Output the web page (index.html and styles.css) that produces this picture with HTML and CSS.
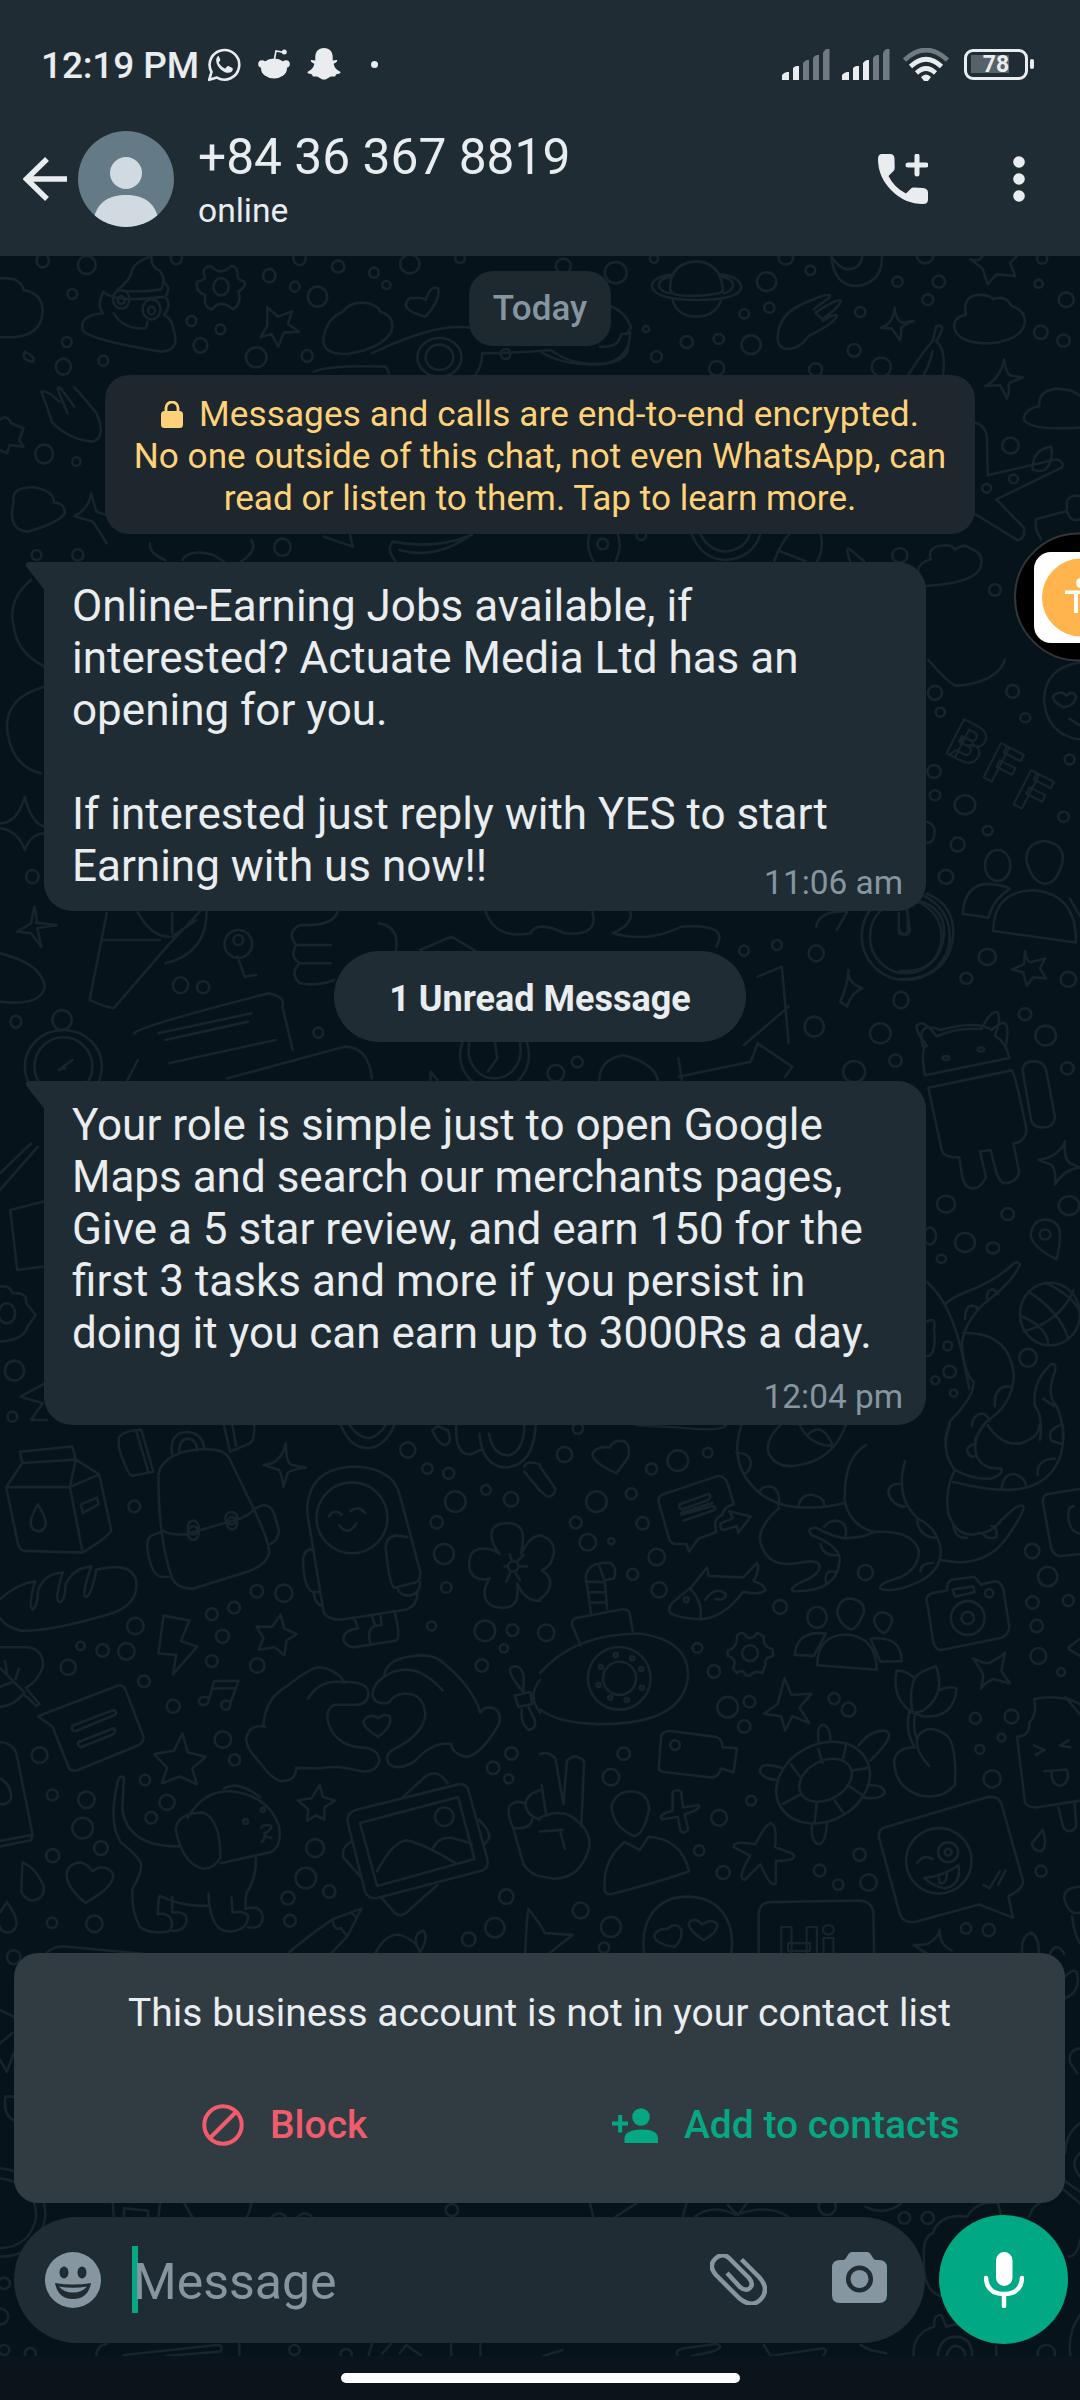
FILE: index.html
```html
<!DOCTYPE html>
<html lang="en">
<head>
<meta charset="utf-8">
<title>Chat</title>
<link rel="stylesheet" href="styles.css">
</head>
<body>
<div class="phone">
  <header class="top">
    <div class="status">
      <span class="clock">12:19 PM</span>
      <svg class="st-wa" viewBox="0 0 34 35"><path d="M2.2 32.8 4.5 25A14.8 14.8 0 1 1 10 30.6Z" fill="none" stroke="#e9edef" stroke-width="2.6" stroke-linejoin="round"/><path d="M12.2 8.8c-.8 0-3 1.3-3 4.600 0 6.500 7.800 12.400 11.900 12.400 3 0 4.700-1.800 4.700-3.800 0-.7-.3-1-.8-1.200l-3.500-1.700c-.7-.3-1-.2-1.400.4l-1.300 1.600c-.4.500-.8.500-1.400.2-2.300-1-4.400-3-5.500-5.200-.3-.6-.1-.9.300-1.300l.9-1.100c.3-.4.300-.8.100-1.300l-1.300-3c-.3-.6-.6-.7-.7-.6Z" fill="#e9edef"/></svg>
      <svg class="st-reddit" viewBox="0 0 32 30"><ellipse cx="16" cy="19.500" rx="13" ry="10" fill="#e9edef"/><circle cx="4" cy="15" r="3.800" fill="#e9edef"/><circle cx="28" cy="15" r="3.800" fill="#e9edef"/><path d="M16.500 10 18 2l8.500 1.500" fill="none" stroke="#e9edef" stroke-width="1.600"/><circle cx="26.300" cy="3" r="2.500" fill="#e9edef"/></svg>
      <svg class="st-snap" viewBox="0 0 34 32"><path d="M17 0c5.500 0 8.700 3.800 8.700 9v3.300c1.500.5 2.800-.7 4.300-.2.900.8-.3 2.300-3.300 3.700.5 4 3.500 6.700 7 8.200-.5 2.200-4.500 2-4.900 2.700-.3.600 0 1.500-1 1.700-1.500.2-3.300-.3-5.300.800C20.600 30.300 19.300 31.600 17 31.600s-3.600-1.300-5.500-2.400c-2-1.100-3.800-.6-5.300-.8-1-.2-.7-1.100-1-1.700-.4-.7-4.400-.5-4.900-2.700 3.500-1.500 6.500-4.200 7-8.200-3-1.400-4.200-2.900-3.300-3.700 1.500-.5 2.800.7 4.300.2V9C8.300 3.800 11.500 0 17 0Z" fill="#e9edef"/></svg>
      <i class="st-dot"></i>
      <svg class="sig" viewBox="0 0 48 31"><g fill="#e9edef"><path d="M0 31v-5q2-2.500 5-3h2v8Z"/><path d="M11 31V19q2-2 4-2h2v14Z"/></g><g fill="#707a80"><path d="M21 31V14q2-2.500 4-3h2v20Z"/><path d="M31 31V9q2-3 4-3h2v25Z"/><path d="M41 31V4q2-4 4-4h2.500v31Z"/></g></svg>
      <svg class="sig sig2" viewBox="0 0 48 31"><g fill="#e9edef"><path d="M0 31v-5q2-2.500 5-3h2v8Z"/><path d="M11 31V19q2-2 4-2h2v14Z"/><path d="M21 31V14q2-2.500 4-3h2v20Z"/></g><g fill="#707a80"><path d="M31 31V9q2-3 4-3h2v25Z"/><path d="M41 31V4q2-4 4-4h2.500v31Z"/></g></svg>
      <svg class="wifi" viewBox="0 0 46 33"><g fill="none" stroke-width="4.600"><path d="M1.500 12Q23-8 44.500 12" stroke="#707a80"/><path d="M7.500 18.500q15.500-14.500 31 0M13.500 25q9.500-9 19 0" stroke="#e9edef"/></g><path d="M18 29q5-5 10 0l-3 4h-4Z" fill="#e9edef"/></svg>
      <span class="battery"><b>78</b></span><i class="batt-cap"></i>
    </div>
    <div class="bar">
      <svg class="back" viewBox="0 0 44 44"><path d="M44 22H4M24 2 3.500 22 24 42" fill="none" stroke="#e9edef" stroke-width="5.500"/></svg>
      <svg class="avatar" viewBox="0 0 96 96"><defs><clipPath id="av"><circle cx="48" cy="48" r="48"/></clipPath></defs><g clip-path="url(#av)"><rect width="96" height="96" fill="#647a87"/><circle cx="48" cy="42" r="16" fill="#d0dae0"/><path d="M15 90C19 70 32 64 48 64s29 6 33 26q-33 12-66 0Z" fill="#d0dae0"/></g></svg>
      <div class="who"><div class="name">+84 36 367 8819</div><div class="presence">online</div></div>
      <svg class="call" viewBox="0 0 50 50"><path d="M4 0H12Q16.500 0 16.500 5L16.700 14Q16.700 16 15.500 17L10.500 22Q16 33.500 28 39.500L33 34.500Q34 33.500 36 33.600L45 34Q50 34.500 50 38.500V45.500Q50 50 45 50Q27 50 13.500 36.500Q0 23 0 5Q0 0 4 0Z" fill="#e9edef"/><path d="M39 2v18M30 11h18" stroke="#e9edef" stroke-width="5" stroke-linecap="round"/></svg>
      <svg class="more" viewBox="0 0 12 46"><g fill="#e9edef"><circle cx="6" cy="6" r="5.800"/><circle cx="6" cy="23" r="5.800"/><circle cx="6" cy="40" r="5.800"/></g></svg>
    </div>
  </header>

  <main class="chat">
    <svg class="wallpaper" viewBox="0 256 1080 2100">
      <!-- upper left doodles -->
      <g transform="translate(0 250) scale(.6888 .3333)">
        <path d="M0 85Q30 80 34 120Q62 130 62 185Q60 255 20 262L0 262M170 120Q190 90 192 60Q196 35 220 18Q218 50 232 62Q242 90 234 118Q205 130 170 120M150 125Q165 160 240 140Q250 110 236 95M150 125Q140 170 150 190Q115 195 120 240Q130 270 235 305Q262 300 252 240Q250 205 238 195Q250 165 240 140M165 190Q180 240 212 235L214 215"/>
        <ellipse cx="176" cy="148" rx="12" ry="28"/><ellipse cx="220" cy="178" rx="13" ry="30"/><ellipse cx="176" cy="150" rx="5" ry="12"/><ellipse cx="220" cy="182" rx="5" ry="12"/>
        <path d="M306 48Q320 80 336 48Q346 50 345 78Q345 90 355 95Q358 110 346 125Q352 160 338 178Q320 145 308 178Q295 175 298 135Q283 125 286 95Q298 90 298 80Q290 55 306 48"/><ellipse cx="321" cy="110" rx="11" ry="26"/>
        <path d="M388 172 404 200 424 184 418 222 434 245 412 248 404 290 394 252 378 262 388 228ZM498 185Q510 150 535 160Q550 170 552 185Q575 200 568 245Q555 295 505 312Q465 315 470 260Q475 205 498 185M600 145Q612 140 618 150Q625 105 636 115Q640 150 618 200Q580 180 592 150Q596 142 600 145M540 310Q590 260 630 240Q660 225 690 235M455 365Q480 345 560 350L565 370M690 375Q700 350 700 310Q740 310 800 300Q830 350 880 340Q915 330 912 280"/>
        <ellipse cx="638" cy="322" rx="32" ry="58"/><ellipse cx="638" cy="322" rx="20" ry="38"/>
        <path d="M90 420Q80 400 86 430L98 490M90 420 108 470M60 425Q72 490 75 515Q100 570 135 575Q155 560 140 490Q125 450 108 412M60 425Q70 420 86 455M0 510Q10 490 16 520L34 535 28 570 34 590 14 585 10 610 0 600M20 755Q15 710 50 712Q80 725 78 758Q95 760 94 790Q85 820 40 845Q10 840 20 755M108 798Q130 775 132 730L140 785 160 800M108 798 135 815 155 880M36 305Q30 330 48 335Q52 320 36 305M218 880Q215 910 240 930M265 930Q275 895 310 915L325 935M470 860 512 890 508 850M575 935Q560 900 570 875Q630 900 685 855M580 900Q630 930 680 860M365 870Q375 900 350 935"/>
        <g><ellipse cx="62" cy="32" rx="9" ry="20"/><ellipse cx="126" cy="45" rx="13" ry="27"/><ellipse cx="105" cy="132" rx="7" ry="15"/><ellipse cx="256" cy="25" rx="8" ry="18"/><ellipse cx="391" cy="77" rx="9" ry="20"/><ellipse cx="435" cy="25" rx="9" ry="20"/><ellipse cx="491" cy="50" rx="9" ry="18"/><ellipse cx="543" cy="68" rx="7" ry="15"/><ellipse cx="595" cy="42" rx="14" ry="28"/><ellipse cx="461" cy="140" rx="14" ry="30"/><ellipse cx="428" cy="110" rx="7" ry="15"/><ellipse cx="561" cy="105" rx="6" ry="12"/><ellipse cx="668" cy="25" rx="7" ry="14"/><ellipse cx="278" cy="213" rx="7" ry="15"/><ellipse cx="320" cy="238" rx="7" ry="15"/><ellipse cx="291" cy="286" rx="10" ry="22"/><ellipse cx="372" cy="322" rx="15" ry="30"/><ellipse cx="446" cy="318" rx="8" ry="18"/><ellipse cx="97" cy="276" rx="7" ry="15"/><ellipse cx="92" cy="350" rx="11" ry="24"/><ellipse cx="150" cy="332" rx="7" ry="15"/><ellipse cx="734" cy="312" rx="7" ry="15"/><ellipse cx="64" cy="612" rx="13" ry="28"/><ellipse cx="111" cy="635" rx="6" ry="13"/><ellipse cx="410" cy="892" rx="12" ry="26"/><ellipse cx="113" cy="915" rx="8" ry="17"/></g>
      </g>
      <!-- upper right doodles -->
      <g transform="translate(540 256) scale(.3444 .3333)">
        <path d="M378 92Q380 20 455 16Q520 20 530 90M378 92Q375 112 395 116Q455 125 520 112Q535 105 530 90M390 55Q325 60 325 92Q335 132 455 132Q575 132 585 95Q580 60 520 55M385 62Q345 65 345 90Q355 110 378 112M528 62Q565 70 560 92Q555 108 533 112M385 133Q400 182 455 182Q510 180 525 133"/>
        <path d="M845 0Q855 90 920 90Q995 80 993 0M845 0Q870 40 895 40Q935 35 935 0M1250 10Q1275 20 1285 0M1250 10 1285 38 1300 85 1325 55 1380 60 1365 20 1385 0M1237 177Q1225 120 1275 116Q1310 118 1315 130Q1350 115 1370 150Q1410 165 1408 200Q1400 250 1310 262Q1210 265 1202 210Q1205 180 1237 177M690 240Q695 180 750 150Q790 130 820 120Q850 112 840 125L795 160M800 170Q850 135 870 132Q885 140 820 190L800 170M820 195Q860 170 862 180Q850 205 780 240Q750 285 710 278Q688 270 690 240M1030 155Q1030 185 1050 200L1085 195Q1060 205 1048 215Q1050 240 1045 252Q1030 230 1022 218L990 215Q1025 205 1030 155M1150 212Q1160 205 1168 215Q1162 240 1150 255Q1180 280 1170 355M1150 212 1140 255Q1110 290 1070 355M1140 285Q1130 330 1115 355M1348 310Q1350 345 1365 358L1403 365Q1370 375 1360 385Q1365 410 1355 428Q1345 400 1335 388L1293 390Q1335 370 1348 310M1450 450Q1445 405 1500 398Q1550 400 1568 420M1450 450Q1405 460 1405 490Q1420 525 1568 515M1265 500Q1300 510 1298 560L1300 658 1500 610Q1525 620 1515 635L1325 730 1405 815Q1410 850 1385 852L1265 775M1430 640Q1430 580 1485 572Q1490 620 1468 640Q1450 650 1430 640M1440 790 1530 765 1530 735Q1540 715 1568 720M1440 790Q1435 820 1455 850M1530 765Q1540 800 1568 790M0 285Q60 330 180 325Q260 310 262 230L235 235Q230 275 175 272M205 150Q250 170 265 215L250 235M440 833Q470 912 540 912Q620 905 640 833M465 833Q490 885 540 887Q595 880 610 833M145 833Q130 870 155 915M225 833Q240 870 220 915M680 915Q700 860 725 833M695 885 770 915M815 833Q825 880 805 915M900 915Q885 870 900 880L940 915M1135 910Q1120 870 1180 868Q1200 870 1205 882Q1230 860 1250 878Q1290 890 1280 930Q1270 980 1120 990M1135 910Q1100 920 1098 945"/>
        <g><circle cx="68" cy="30" r="22"/><circle cx="220" cy="50" r="32"/><circle cx="331" cy="8" r="12"/><circle cx="658" cy="77" r="28"/><circle cx="714" cy="5" r="21"/><circle cx="785" cy="43" r="14"/><circle cx="1038" cy="77" r="15"/><circle cx="1158" cy="77" r="18"/><circle cx="1126" cy="131" r="16"/><circle cx="1118" cy="-2" r="24"/><circle cx="1458" cy="8" r="15"/><circle cx="1448" cy="83" r="12"/><circle cx="1528" cy="131" r="22"/><circle cx="593" cy="173" r="14"/><circle cx="666" cy="155" r="15"/><circle cx="930" cy="168" r="15"/><circle cx="308" cy="219" r="9"/><circle cx="426" cy="258" r="18"/><circle cx="519" cy="249" r="15"/><circle cx="613" cy="266" r="28"/><circle cx="338" cy="302" r="16"/><circle cx="912" cy="283" r="19"/><circle cx="991" cy="333" r="28"/><circle cx="513" cy="337" r="22"/><circle cx="800" cy="341" r="19"/><circle cx="1454" cy="229" r="20"/><circle cx="1520" cy="254" r="18"/><circle cx="1366" cy="569" r="24"/><circle cx="1297" cy="697" r="13"/><circle cx="1375" cy="669" r="13"/><circle cx="182" cy="864" r="16"/><circle cx="1045" cy="898" r="22"/><circle cx="294" cy="838" r="14"/><circle cx="1321" cy="1002" r="17"/></g>
      </g>
      <!-- band between the bubbles and the left edge -->
      <g transform="translate(0 540) scale(.6888 .3333)">
        <path d="M45 120Q10 180 20 260Q25 340 65 380M65 440Q10 470 10 560Q15 680 60 700M0 850Q25 850 36 770Q45 850 65 860M0 865Q25 870 36 930Q45 880 65 880M50 1100Q55 1145 52 1148L82 1155 54 1165 60 1220 45 1180 25 1175 45 1150ZM155 1120 130 1380Q150 1400 165 1405L240 1225 290 1115M150 1200H232M200 1117Q220 1190 245 1190M250 1120V1180M285 1140 250 1190M300 1115Q300 1240 240 1270M345 1250 355 1310 372 1305M0 1240Q60 1270 65 1340Q60 1400 0 1385M490 1115Q485 1160 435 1155Q415 1180 430 1215Q420 1250 435 1270Q420 1300 435 1330Q460 1340 485 1320M550 1150Q580 1160 575 1230M430 1215H480M435 1270H480M705 1115Q720 1200 770 1180Q780 1140 820 1180Q870 1190 860 1115M610 1230 655 1190 690 1232M890 1180Q920 1150 915 1115M890 1180Q940 1210 990 1160Q1060 1150 1040 1220M195 1480Q200 1460 390 1360Q415 1370 410 1400L425 1530M230 1480 365 1420M240 1500 360 1445M1100 1310 1135 1280 1145 1510M1080 1515 1145 1400M1185 1160Q1190 1110 1230 1115L1215 1170M1340 1520Q1330 1440 1365 1470Q1420 1440 1440 1470Q1470 1410 1460 1520M1220 1385Q1230 1340 1232 1290Q1230 1330 1252 1345Q1235 1360 1230 1400Z"/>
        <ellipse cx="1315" cy="1188" rx="64" ry="132"/><ellipse cx="1315" cy="1190" rx="52" ry="110"/><path d="M1305 1120V1180Q1315 1190 1318 1170V1115"/><ellipse cx="90" cy="1440" rx="14" ry="30"/><ellipse cx="92" cy="1580" rx="56" ry="110"/><ellipse cx="92" cy="1580" rx="42" ry="88"/><ellipse cx="346" cy="1212" rx="20" ry="42"/><ellipse cx="346" cy="1200" rx="7" ry="15"/>
        <g><ellipse cx="53" cy="45" rx="7" ry="15"/><ellipse cx="47" cy="1010" rx="9" ry="20"/><ellipse cx="262" cy="1336" rx="11" ry="24"/><ellipse cx="295" cy="1342" rx="9" ry="18"/><ellipse cx="1128" cy="1215" rx="7" ry="15"/><ellipse cx="1185" cy="1240" rx="11" ry="24"/><ellipse cx="1080" cy="1232" rx="7" ry="15"/><ellipse cx="1308" cy="1380" rx="11" ry="25"/><ellipse cx="1278" cy="1480" rx="15" ry="30"/><ellipse cx="1182" cy="1460" rx="14" ry="30"/><ellipse cx="23" cy="1445" rx="8" ry="18"/><ellipse cx="462" cy="1478" rx="7" ry="15"/></g>
      </g>
      <g transform="translate(0 1040) scale(.6888 .3333)">
        <path d="M185 120 200 60M245 70 400 0M330 115 500 20Q535 20 540 115M625 120V95L635 120M870 120Q870 60 905 45Q950 70 955 120M985 110 1090 65 1100 10M985 55 990 120M1100 10 1150 80 1140 110M0 450 55 320M0 400 45 310M15 510 62 485M15 510 25 690 62 680M0 740Q15 735 18 760Q40 755 38 790L52 825 40 860Q35 900 0 905M65 1030 30 1070 62 1090 45 1140 68 1140M95 85 85 90 105 60"/>
        <ellipse cx="718" cy="45" rx="50" ry="105"/><ellipse cx="718" cy="30" rx="38" ry="85"/><path d="M718 0 722 55 708 95"/><ellipse cx="10" cy="820" rx="12" ry="30"/><ellipse cx="807" cy="100" rx="12" ry="25"/><ellipse cx="838" cy="66" rx="8" ry="16"/><ellipse cx="21" cy="992" rx="14" ry="30"/><ellipse cx="18" cy="1130" rx="7" ry="15"/><ellipse cx="1240" cy="95" rx="16" ry="32"/><ellipse cx="1300" cy="62" rx="9" ry="18"/>
      </g>
      <!-- right edge doodles -->
      <g transform="translate(900 660) scale(.3333 .4974)">
        <path d="M85 0Q150 50 170 52Q290 45 315 0M540 5Q435 15 432 80Q440 150 540 160M490 95Q450 80 462 70Q490 60 498 72Q520 60 527 72Q530 90 490 95M508 118 540 132M80 470Q160 490 160 550Q150 640 0 642M60 485Q135 500 132 550Q120 630 0 625M20 500 30 545Q20 560 0 545M188 510Q195 450 265 450Q310 452 330 460Q280 480 265 518ZM280 545Q280 465 400 463Q530 470 528 568ZM510 480 540 515M80 325Q110 330 102 355Q95 370 80 367M375 585Q380 610 395 607L435 600 420 620 438 640 400 638 380 655 370 628 335 622 372 612ZM75 835Q60 780 80 775Q45 745 50 735Q70 720 110 757Q170 738 245 742Q270 705 292 708Q305 720 285 755Q320 770 328 800ZM85 860 335 825Q345 830 380 945Q375 970 340 972L358 1030Q350 1050 315 1052Q295 1050 285 1020L272 985 240 988 258 1040Q240 1065 215 1062Q190 1060 185 1030L178 1000Q130 1000 125 985ZM368 825Q370 805 405 807Q435 808 440 830L465 920Q460 940 430 940Q395 940 392 920ZM495 968Q490 1000 510 1012L540 1020Q490 1025 465 1055Q470 1030 455 1015L415 1005Q475 1000 495 968M470 1205Q395 1180 392 1155Q400 1125 435 1125Q480 1128 480 1155Q480 1180 470 1205M360 1215Q350 1205 330 1220Q280 1250 200 1270Q160 1280 135 1295M360 1215Q340 1250 250 1295Q170 1350 190 1400Q200 1440 220 1450Q225 1480 150 1530L135 1568M80 1250Q150 1290 185 1390L208 1465M190 1353Q330 1350 342 1440Q335 1500 260 1530 240 1545 225 1568M80 1330Q110 1320 102 1345Q110 1400 80 1400M420 1568Q430 1520 405 1500Q395 1450 455 1415Q475 1415 460 1440Q440 1480 470 1500Q490 1530 490 1568M360 1318Q440 1340 445 1375M385 1270Q480 1310 505 1365M440 1253Q520 1280 540 1310M370 1350Q480 1330 520 1268M195 1325Q195 1300 215 1298Q240 1300 230 1305M260 1285Q260 1265 280 1265L295 1275M285 1500Q280 1465 320 1460L335 1462M215 1540Q220 1515 250 1515 265 1520 268 1530M430 1485 462 1500"/>
        <ellipse cx="293" cy="413" rx="38" ry="31"/><path d="M433 364Q500 370 486 410Q470 450 433 450Q395 445 380 405Q375 368 433 364"/><ellipse cx="450" cy="1315" rx="90" ry="63"/><ellipse cx="435" cy="1155" rx="16" ry="10"/><ellipse cx="138" cy="800" rx="10" ry="4"/><ellipse cx="243" cy="783" rx="10" ry="4"/>
        <g><ellipse cx="105" cy="66" rx="21" ry="14"/><ellipse cx="121" cy="105" rx="14" ry="9"/><ellipse cx="338" cy="63" rx="19" ry="13"/><ellipse cx="376" cy="116" rx="15" ry="9"/><ellipse cx="102" cy="224" rx="20" ry="13"/><ellipse cx="105" cy="272" rx="16" ry="10"/><ellipse cx="195" cy="291" rx="31" ry="19"/><ellipse cx="263" cy="343" rx="15" ry="9"/><ellipse cx="173" cy="371" rx="21" ry="14"/><ellipse cx="138" cy="436" rx="22" ry="14"/><ellipse cx="509" cy="200" rx="15" ry="10"/><ellipse cx="491" cy="315" rx="16" ry="10"/><ellipse cx="262" cy="597" rx="26" ry="16"/><ellipse cx="199" cy="640" rx="18" ry="11"/><ellipse cx="505" cy="642" rx="23" ry="15"/><ellipse cx="375" cy="712" rx="19" ry="12"/><ellipse cx="437" cy="755" rx="31" ry="20"/><ellipse cx="502" cy="821" rx="19" ry="12"/><ellipse cx="138" cy="1094" rx="27" ry="17"/><ellipse cx="323" cy="1114" rx="19" ry="12"/><ellipse cx="195" cy="1171" rx="30" ry="19"/><ellipse cx="279" cy="1182" rx="19" ry="11"/><ellipse cx="124" cy="1204" rx="14" ry="8"/><ellipse cx="507" cy="1097" rx="31" ry="19"/><ellipse cx="90" cy="1158" rx="18" ry="17"/><ellipse cx="143" cy="1379" rx="13" ry="9"/><ellipse cx="384" cy="1403" rx="26" ry="18"/><ellipse cx="149" cy="1431" rx="19" ry="12"/><ellipse cx="106" cy="1448" rx="12" ry="8"/><ellipse cx="161" cy="1474" rx="11" ry="7"/></g>
      </g>
      <g class="letters"><text x="0" y="0" transform="translate(944 752) rotate(27)">B</text><text x="0" y="0" transform="translate(981 776) rotate(27)">F</text><text x="0" y="0" transform="translate(1011 803) rotate(27)">F</text></g>
      <!-- lower left doodles -->
      <g transform="translate(0 1420) scale(.3444)">
        <path d="M65 125 58 92 210 77 220 115 288 158 323 320Q320 335 240 385L70 380Q55 378 50 350L18 195ZM65 125 220 115 203 195 18 195M203 195 240 385M203 195 288 158M235 245 282 225 286 245 240 270ZM110 245Q135 285 133 305Q125 325 110 323Q85 318 90 290 95 270 110 245"/>
        <path d="M345 50Q360 30 410 28L445 150 385 162Q370 160 345 80ZM395 30 430 148M650 15 668 92 725 68Q740 60 738 15M675 15 685 75M465 140Q500 85 600 85Q650 85 665 110L740 265Q780 350 782 385Q775 420 720 440L560 490Q515 490 500 460Q460 350 460 160ZM472 320Q490 335 540 332L700 285Q735 270 738 255M745 255Q780 235 795 270L810 320Q808 350 785 360M470 325 440 335Q425 345 428 375Q440 455 470 455L490 456M500 100Q490 35 545 35Q590 40 593 85M520 95Q520 55 545 54Q570 55 573 88"/>
        <ellipse cx="561" cy="312" rx="16" ry="20"/><ellipse cx="561" cy="328" rx="16" ry="20"/><ellipse cx="672" cy="285" rx="18" ry="18"/><ellipse cx="674" cy="300" rx="15" ry="18"/>
        <path d="M830 68Q830 120 845 130L888 138Q840 145 835 155 828 180 822 195 820 160 810 145L765 130Q815 130 830 68M940 560 892 270Q890 140 1030 135Q1140 140 1160 215L1220 440Q1225 470 1195 475L1145 487Q1130 480 1120 370Q1120 340 1150 335L1183 340M940 560Q955 580 990 580L1180 550Q1210 540 1212 505M908 375Q880 375 880 410Q882 490 910 500L930 500M910 500Q915 535 935 540M1155 490Q1160 510 1190 510Q1220 505 1220 470M1030 580 1040 605Q995 610 997 640Q1010 665 1040 658L1150 640Q1165 630 1145 555M1080 570 1090 598 1108 595 1105 570M1085 600Q1065 610 1075 645M955 280Q970 255 993 275M1018 265Q1040 245 1060 270M985 305Q1010 340 1035 300"/>
        <circle cx="1022" cy="284" r="103"/>
        <path d="M0 520Q50 475 102 468Q80 545 95 550 110 540 110 495Q130 445 182 443Q155 530 175 530 190 520 190 480Q210 430 265 425Q235 510 250 514 265 510 280 435Q380 410 395 465Q405 530 330 560Q150 615 60 612 15 600 0 575M475 568 550 582 525 642 573 658 502 738 512 682 460 678ZM815 565 825 605 862 622 832 640 826 683 797 660 752 667 765 633 745 600 790 600ZM0 660H80Q125 665 125 715Q110 760 75 778L115 825 105 830 68 795Q40 830 0 833M0 720 70 790M0 775 38 760M15 700 20 735M55 722 45 752M110 860 345 770Q360 770 365 785L417 920Q415 940 400 945L225 1017Q205 1020 200 1010L152 890ZM210 888 330 842Q345 850 330 858L220 903Q205 905 210 888M228 935 330 895Q340 905 325 914L235 950Q222 945 228 935M605 818 622 758 693 757 668 825M620 780 685 778M605 818A14 11 0 1 1 580 810Q590 800 608 808M668 825A13 13 0 1 1 645 820Q655 810 670 820M765 885Q770 810 830 775Q900 720 925 718Q970 720 1000 760Q1070 760 1070 795Q1065 830 1030 827H970Q945 840 952 875Q970 940 1040 950Q1100 950 1102 990Q1090 1025 1050 1020Q970 1000 930 1012L860 1010Q860 1050 815 1048Q785 1040 760 1000Q700 940 720 910Q730 885 770 890M895 808Q930 750 1000 762M1115 745Q1120 700 1180 688Q1250 675 1280 700Q1370 770 1395 850Q1410 825 1440 840Q1460 860 1445 890Q1390 980 1350 978Q1310 965 1310 940H1295Q1250 940 1205 990Q1160 1020 1130 1000Q1110 970 1155 950Q1230 910 1235 855Q1230 790 1170 795Q1140 800 1130 820Q1090 830 1082 800Q1080 770 1115 745 1200 690 1285 785M1098 865Q1120 850 1132 862Q1140 890 1098 920Q1055 895 1055 875Q1070 850 1098 865M530 910 545 965 597 978 558 1012 572 1058 522 1035 470 1055 485 1010 448 970 505 960ZM928 1060 938 1095 972 1105 942 1125 942 1160 918 1148 892 1163 895 1130 865 1105 905 1098Z"/>
        <path d="M0 935Q45 940 50 980L95 1205 90 1220 0 1238M0 1222 92 1205M0 1040Q35 1060 32 1100Q20 1120 0 1115M360 1040Q345 1025 340 1060Q315 1170 350 1225Q405 1270 410 1290Q410 1320 385 1360Q380 1420 405 1470Q430 1495 490 1485Q505 1470 495 1445Q480 1430 458 1435Q460 1380 465 1382 530 1415 605 1410M360 1040 355 1130Q370 1240 520 1238M545 1155Q590 1075 670 1078Q780 1090 810 1180Q820 1240 785 1255L640 1287M650 1070Q690 1045 755 1095M510 1190Q515 1140 590 1140Q640 1160 640 1270Q620 1305 590 1303Q530 1290 510 1190M743 1270Q745 1330 715 1375L712 1420Q760 1405 763 1445Q760 1480 720 1473M605 1375Q610 1490 670 1485 720 1480 720 1440Q710 1425 675 1430L672 1385M500 1385V1430Q545 1425 542 1455Q535 1485 500 1483M758 1185Q765 1172 788 1178Q788 1192 768 1200Q775 1215 788 1212M768 1200Q772 1218 760 1224"/>
        <circle cx="713" cy="1166" r="7"/><circle cx="763" cy="1132" r="6"/>
        <path d="M65 1285 62 1370Q75 1395 95 1395Q130 1390 127 1355Q105 1300 65 1285M268 1310Q300 1285 327 1315Q340 1350 248 1402Q185 1350 195 1310Q205 1285 235 1285Q255 1290 268 1310M20 1400Q50 1440 48 1465Q40 1490 20 1488 0 1485 0 1470M20 1400 0 1430M1010 1170Q1005 1140 1035 1132L1330 1058Q1355 1055 1360 1075L1415 1275Q1420 1300 1400 1308L1095 1388Q1070 1392 1060 1370ZM1045 1170 1330 1095 1378 1275 1095 1353ZM1095 1310Q1140 1225 1180 1220Q1230 1230 1320 1285M1255 1248Q1270 1210 1310 1213L1370 1230M1170 1095 1235 1035Q1270 1010 1300 1055M1390 1160Q1425 1195 1420 1215L1405 1235M1020 1225Q990 1240 997 1270L1050 1330M1110 1390 1145 1430Q1160 1445 1180 1430L1270 1350"/><circle cx="1290" cy="1152" r="27"/>
        <path d="M840 1545Q880 1510 965 1450L1050 1418 1008 1500 960 1550M965 1450Q970 1485 990 1475L1008 1500M1020 1430 1035 1445M1090 1548Q1120 1490 1160 1495Q1210 1510 1220 1548M1210 1525Q1200 1490 1230 1483Q1245 1505 1220 1545M135 1548Q150 1530 180 1528L415 1550M1525 1550Q1530 1430 1535 1420L1568 1465M990 15Q1015 80 1070 82Q1120 75 1145 15M1015 15Q1040 50 1070 53Q1100 48 1120 15M1325 15Q1320 100 1365 100L1400 85M1392 40Q1400 135 1470 138Q1550 130 1555 15M1420 40Q1430 100 1475 103Q1520 95 1523 15M1255 30Q1275 75 1295 73Q1315 60 1300 30L1270 18 1255 30M1522 135Q1530 115 1568 130M1522 150 1568 205"/>
        <path d="M1450 388C1420 350 1410 300 1475 300C1530 300 1520 350 1513 388C1530 355 1545 338 1568 335M1450 388C1410 362 1362 370 1362 415C1362 465 1400 466 1422 460C1400 490 1395 545 1460 545C1505 545 1505 510 1502 475C1515 505 1535 528 1568 525"/>
        <path d="M1465 425H1472M1508 425H1530M1480 390 1485 405M1497 445 1510 465M1520 392 1503 410M1470 470 1482 442"/><circle cx="1490" cy="425" r="15"/>
        <path d="M1520 790Q1475 740 1482 720Q1510 705 1520 740ZM1495 800 1540 790 1545 825 1505 833ZM1515 840Q1510 880 1535 900Q1560 895 1552 870L1535 835M1568 755Q1530 800 1568 850M1490 1185Q1470 1140 1480 1120Q1500 1100 1525 1115Q1530 1085 1568 1075M1490 1185 1520 1290Q1540 1320 1568 1325M1525 1115Q1530 1150 1568 1160M1490 1185Q1540 1190 1545 1160"/>
        <g><circle cx="390" cy="251" r="17"/><circle cx="1184" cy="87" r="22"/><circle cx="1241" cy="141" r="15"/><circle cx="1303" cy="155" r="16"/><circle cx="1411" cy="203" r="14"/><circle cx="1322" cy="237" r="30"/><circle cx="1484" cy="230" r="21"/><circle cx="1268" cy="297" r="18"/><circle cx="1289" cy="389" r="29"/><circle cx="1296" cy="486" r="15"/><circle cx="1253" cy="598" r="13"/><circle cx="1408" cy="612" r="30"/><circle cx="1488" cy="610" r="17"/><circle cx="1463" cy="663" r="12"/><circle cx="1399" cy="713" r="18"/><circle cx="746" cy="497" r="18"/><circle cx="824" cy="503" r="25"/><circle cx="680" cy="545" r="17"/><circle cx="615" cy="564" r="17"/><circle cx="646" cy="628" r="19"/><circle cx="615" cy="700" r="17"/><circle cx="747" cy="713" r="21"/><circle cx="393" cy="598" r="24"/><circle cx="234" cy="656" r="12"/><circle cx="298" cy="669" r="18"/><circle cx="367" cy="672" r="24"/><circle cx="198" cy="718" r="22"/><circle cx="418" cy="759" r="17"/><circle cx="503" cy="831" r="19"/><circle cx="647" cy="928" r="24"/><circle cx="681" cy="987" r="16"/><circle cx="115" cy="973" r="23"/><circle cx="421" cy="1045" r="15"/><circle cx="152" cy="1089" r="16"/><circle cx="251" cy="1103" r="24"/><circle cx="485" cy="1110" r="22"/><circle cx="439" cy="1155" r="17"/><circle cx="240" cy="1185" r="30"/><circle cx="293" cy="1243" r="20"/><circle cx="153" cy="1265" r="19"/><circle cx="915" cy="1243" r="26"/><circle cx="888" cy="1330" r="30"/><circle cx="956" cy="1369" r="18"/><circle cx="836" cy="1388" r="19"/><circle cx="842" cy="1454" r="17"/><circle cx="151" cy="1460" r="15"/><circle cx="274" cy="1463" r="24"/><circle cx="1485" cy="968" r="18"/><circle cx="1432" cy="1010" r="18"/><circle cx="1477" cy="1042" r="13"/><circle cx="1470" cy="1384" r="21"/><circle cx="1437" cy="1474" r="28"/><circle cx="1361" cy="1508" r="20"/><circle cx="40" cy="1560" r="20"/></g>
      </g>
      <!-- lower right doodles -->
      <g transform="translate(540 1420) scale(.3444)">
        <path d="M202 80Q215 55 245 62Q265 75 255 110L222 155Q155 125 152 100Q160 75 202 80M0 135 45 200Q40 225 20 222L0 205M280 15 400 22Q530 35 540 15M345 240Q340 220 360 215L515 163Q535 160 545 185L563 245Q535 250 530 275Q500 285 512 325L460 345 433 382 425 360 390 360Q378 355 375 345ZM405 245 490 214Q500 225 485 234L412 260Q402 255 405 245M410 270 500 240M418 292 505 262Q515 255 500 250L412 275M525 300 560 285 550 265 612 280 575 328 572 308 530 320Q520 310 525 300"/>
        <path d="M0 335C35 345 50 370 35 405Q30 425 5 437Q30 450 30 475Q25 505 0 520"/>
        <path d="M585 15Q545 130 635 210Q720 280 888 240M665 100Q650 60 698 15M665 100Q690 140 740 133Q850 120 888 15M755 15Q780 70 845 75M780 40Q820 5 848 70M570 95Q610 95 612 125Q610 150 595 155M635 210Q650 185 680 197Q700 215 692 248M750 255Q755 215 790 217Q825 225 825 245M947 72Q880 110 885 240Q905 310 970 325Q1085 320 1100 380Q1100 430 1050 455Q980 475 988 490Q1030 505 1110 465Q1170 430 1163 370Q1150 310 1095 285Q1030 220 1060 120M1043 185Q1010 185 1012 215Q1025 250 1060 252M1095 290Q1100 340 1150 342M1105 440Q1105 415 1140 415M695 255Q620 320 645 370Q670 430 750 415Q820 400 810 435Q800 455 760 470Q720 490 735 497Q870 500 870 400Q860 360 790 335Q770 315 800 312Q870 350 900 342Q945 340 970 325M825 310Q850 280 880 300Q895 320 885 342M815 360Q820 395 865 393M830 470Q825 435 855 440M1190 15Q1160 90 1205 145Q1175 200 1185 270Q1210 345 1270 330Q1310 330 1340 290Q1390 240 1403 250Q1410 260 1370 320Q1300 440 1160 405M1200 180Q1360 220 1430 190Q1530 150 1518 15M1300 15Q1340 75 1395 68Q1450 50 1450 15M1205 145Q1260 175 1310 170Q1350 155 1338 140Q1290 145 1270 110Q1250 60 1290 15M1340 200Q1345 155 1380 157Q1410 170 1410 190M1445 160Q1440 115 1495 112M1510 15Q1470 30 1485 60L1515 70M1200 305Q1205 345 1240 342M1285 330Q1300 350 1325 340 1330 310 1310 308M1258 70Q1235 80 1242 95 1250 110 1262 105M1568 200 1475 215Q1455 220 1462 250L1485 375Q1495 395 1510 395L1568 390M1550 250Q1530 250 1535 290 1540 325 1568 330"/>
        <path d="M378 560Q370 545 385 530L440 485 485 428 490 453 590 457 630 415Q640 430 620 468Q650 475 655 495Q630 510 590 498Q530 580 460 578Q400 575 378 560M435 488Q475 530 465 578M480 522Q510 480 540 505Q540 525 510 520M148 560 133 455Q140 410 205 415Q225 430 215 460L188 465 195 548M133 470H188M140 500H190M143 530H192M170 418 185 460M118 655 93 595Q90 580 105 575L235 550Q255 548 260 560L270 615M0 735Q100 620 290 620Q430 640 430 740Q420 885 170 883Q50 880 0 840"/>
        <circle cx="230" cy="750" r="91"/><circle cx="231" cy="750" r="48"/><g><circle cx="220" cy="683" r="6"/><circle cx="268" cy="692" r="6"/><circle cx="294" cy="723" r="6"/><circle cx="296" cy="777" r="6"/><circle cx="252" cy="813" r="6"/><circle cx="204" cy="806" r="6"/><circle cx="170" cy="769" r="6"/><circle cx="177" cy="717" r="6"/></g>
        <path d="M572 625Q590 610 600 630Q620 640 630 618L650 628Q645 660 675 665L677 685Q650 690 655 710L645 735Q625 725 610 742H598Q590 720 572 735L560 720Q575 695 545 685V670Q575 660 572 625"/><circle cx="610" cy="677" r="23"/>
        <path d="M805 543A28 30 0 1 1 804 543M902 518Q945 525 940 560Q920 610 900 608Q865 590 863 555Q870 518 902 518M996 558Q1025 565 1022 585Q1010 620 995 618Q970 600 970 580Q975 558 996 558M805 712Q805 625 890 623Q975 630 978 725ZM740 682Q745 610 830 620L795 685ZM960 635Q1050 625 1050 700L988 702ZM1125 535Q1115 510 1140 502L1182 495Q1180 465 1200 463L1262 455 1280 478 1320 468Q1340 470 1345 490L1363 600Q1360 625 1340 632L1165 668Q1148 668 1142 645ZM1198 492 1258 483 1262 500 1205 513ZM1258 692Q1295 710 1305 705 1335 690 1350 675 1340 725 1340 730L1365 765Q1330 755 1315 752 1290 765 1280 780 1290 745 1285 735ZM1082 850Q1020 810 1035 728Q1060 725 1088 750Q1100 730 1150 715 1180 800 1110 845 1090 850 1082 850M1088 750Q1070 790 1082 850M1158 785Q1190 770 1210 780Q1200 870 1110 860 1095 855 1090 850M1072 850Q1060 900 1085 945M1090 850Q1080 890 1095 930M1130 1005Q1080 950 1100 915Q1130 880 1180 915Q1210 940 1205 1060Q1170 1100 1110 1092Q1030 1070 1028 990Q1035 950 1088 950M710 750 730 798 788 795 753 835 782 880 733 860 712 902 700 860 650 853 690 825ZM345 1010 352 915Q360 902 380 903L510 920Q530 925 530 950L572 953 562 1023 525 1012Q520 1035 500 1038L360 1022Q345 1020 345 1010"/>
        <circle cx="1242" cy="575" r="49"/><circle cx="1242" cy="575" r="18"/><circle cx="1304" cy="503" r="12"/><circle cx="392" cy="944" r="14"/>
        <ellipse cx="822" cy="1053" rx="142" ry="111" transform="rotate(-28 822 1053)"/><ellipse cx="829" cy="1046" rx="81" ry="56" transform="rotate(-28 829 1046)"/><path d="M810 940Q800 885 825 885Q845 895 843 935M925 945Q960 900 1000 902Q1040 910 960 988M700 1010Q640 990 638 1020Q650 1045 690 1045M790 1172Q785 1230 812 1232Q830 1225 833 1170M950 1060Q1005 1060 1000 1085Q980 1105 935 1095M728 1000 755 1035M808 955 820 995M890 938 880 982M955 1010 905 1018M935 1088 893 1060M880 1140 855 1105M797 1172 803 1115M705 1115 755 1088"/>
        <path d="M0 970Q30 960 45 985L68 1115 78 990Q100 965 128 990L120 1180M5 1060 18 1150M0 1155Q50 1130 90 1150 150 1190 143 1240Q120 1330 40 1332L0 1325M0 1195 65 1190M58 1190 72 1245M262 1078Q315 1080 317 1130Q300 1210 270 1207Q210 1180 208 1120Q220 1080 262 1078M188 1365Q180 1280 245 1225L290 1248 315 1210Q410 1215 433 1310Q350 1340 205 1377Q190 1378 188 1365M385 1080Q400 1070 410 1080L415 1125 460 1118Q470 1130 420 1145L430 1190Q415 1205 407 1190L400 1152 355 1160Q340 1145 385 1135ZM670 1170Q690 1180 682 1240L735 1260Q750 1280 685 1280L685 1345Q670 1360 640 1290L595 1335Q570 1335 610 1265L562 1240Q560 1220 625 1232Q650 1180 670 1170"/>
        <path d="M985 1215Q980 1190 1000 1183L1300 1095Q1330 1090 1340 1115L1403 1340Q1400 1365 1360 1382L1373 1445 1275 1407 1085 1458Q1055 1460 1045 1435ZM1095 1285Q1115 1260 1140 1275M1115 1330Q1170 1325 1215 1293Q1225 1350 1175 1360 1145 1355 1115 1330M1158 1325 1160 1345Q1180 1350 1182 1315M1288 1350 1305 1360 1335 1310M1330 1350 1352 1308"/><circle cx="1158" cy="1280" r="95"/><circle cx="1185" cy="1255" r="29"/><circle cx="1185" cy="1255" r="10"/>
        <path d="M1385 920Q1425 915 1420 880Q1445 855 1435 810Q1480 800 1530 810L1568 855M1385 920 1408 1110Q1415 1125 1440 1125L1568 1105M1525 805 1568 825M1505 1125 1520 1185Q1540 1205 1557 1180L1552 1110M1435 945 1465 958 1440 972M1535 930 1510 945 1540 950M1465 1020 1530 1015Q1540 1055 1510 1062 1485 1060 1485 1022M1460 1190Q1475 1240 1455 1252Q1430 1250 1428 1230ZM1568 1355Q1510 1360 1525 1400Q1540 1440 1568 1430M1545 1440Q1550 1490 1568 1520M1085 1525 1125 1522Q1160 1500 1160 1480 1160 1525 1195 1540M1085 1525 1125 1550M1400 1550Q1395 1500 1425 1488Q1450 1500 1448 1550M1480 1550Q1500 1510 1522 1550M0 1465 15 1490 95 1495 25 1550M302 1548C290 1450 340 1384 428 1384C515 1384 570 1450 555 1548M635 1548V1430Q640 1400 670 1400L930 1395Q965 1400 968 1430L970 1548M370 1478Q395 1455 410 1480 415 1510 390 1530 330 1520 332 1495 345 1475 370 1478M470 1465Q500 1445 515 1465 515 1490 475 1510 430 1480 432 1460 450 1440 470 1465M1535 660 1568 635M1535 665 1568 685"/>
        <g><circle cx="110" cy="25" r="15"/><circle cx="71" cy="100" r="22"/><circle cx="400" cy="118" r="30"/><circle cx="487" cy="95" r="14"/><circle cx="324" cy="142" r="16"/><circle cx="265" cy="214" r="16"/><circle cx="164" cy="237" r="30"/><circle cx="104" cy="298" r="17"/><circle cx="298" cy="300" r="18"/><circle cx="139" cy="355" r="24"/><circle cx="207" cy="352" r="9"/><circle cx="339" cy="398" r="24"/><circle cx="269" cy="448" r="16"/><circle cx="346" cy="493" r="22"/><circle cx="18" cy="618" r="24"/><circle cx="425" cy="522" r="7"/><circle cx="697" cy="543" r="20"/><circle cx="945" cy="443" r="22"/><circle cx="1429" cy="380" r="21"/><circle cx="1474" cy="455" r="28"/><circle cx="1430" cy="530" r="18"/><circle cx="1534" cy="524" r="16"/><circle cx="1442" cy="598" r="18"/><circle cx="1447" cy="685" r="23"/><circle cx="1513" cy="732" r="11"/><circle cx="457" cy="662" r="14"/><circle cx="505" cy="730" r="18"/><circle cx="545" cy="834" r="30"/><circle cx="608" cy="818" r="17"/><circle cx="593" cy="890" r="18"/><circle cx="854" cy="809" r="16"/><circle cx="896" cy="841" r="20"/><circle cx="243" cy="969" r="18"/><circle cx="206" cy="1037" r="24"/><circle cx="1264" cy="866" r="16"/><circle cx="1369" cy="861" r="20"/><circle cx="1340" cy="922" r="11"/><circle cx="1277" cy="956" r="13"/><circle cx="1313" cy="1042" r="25"/><circle cx="613" cy="1105" r="14"/><circle cx="520" cy="1155" r="23"/><circle cx="462" cy="1250" r="15"/><circle cx="532" cy="1314" r="19"/><circle cx="812" cy="1308" r="17"/><circle cx="928" cy="1262" r="18"/><circle cx="866" cy="1349" r="15"/><circle cx="954" cy="1343" r="24"/><circle cx="1455" cy="1310" r="16"/><circle cx="118" cy="1424" r="23"/><circle cx="206" cy="1472" r="29"/><circle cx="186" cy="1532" r="15"/><circle cx="1237" cy="1476" r="15"/><circle cx="1303" cy="1481" r="18"/></g>
      </g>
      <g class="letters"><text class="hi" x="778" y="1969">Hi</text></g>
      <!-- around the composer -->
      <g transform="translate(0 1920) scale(.3444 .3333)">
        <path d="M0 270 40 290M0 370 35 340M0 420 20 455 40 400M40 530H15Q10 590 40 600M0 745Q130 760 132 890Q110 1010 0 1010M0 775Q105 790 105 890Q90 980 0 985M330 890 328 850M360 890V865L430 872V890M535 848Q550 880 560 892M730 848Q725 880 715 892M465 848 460 890M790 890Q810 870 830 890M865 890Q885 870 905 890M280 1308Q280 1275 310 1272M360 1305 630 1275Q650 1275 640 1295L480 1308M695 1272V1308M1070 1308 1080 1272M1110 1300 1135 1272M1160 1300 1180 1275 1225 1308M1310 1272V1308M1395 1272V1308"/>
        <g><circle cx="1312" cy="870" r="18"/><circle cx="12" cy="1090" r="17"/><circle cx="0" cy="1190" r="24"/><circle cx="12" cy="1290" r="15"/><circle cx="88" cy="1300" r="16"/><circle cx="855" cy="1290" r="15"/><circle cx="1005" cy="1303" r="16"/></g>
      </g>
      <g transform="translate(540 1920) scale(.3444 .3333)">
        <path d="M1525 170Q1560 130 1562 180Q1560 220 1525 235M1568 385Q1530 390 1540 430L1560 460M1568 610Q1525 640 1525 700M1568 700Q1535 730 1568 770M1510 800 1568 850M1520 780 1568 815M145 850 155 890M220 890 280 850M415 890 425 850M450 890Q500 850 570 885Q660 850 720 890M545 855 575 885 600 850M945 860Q1000 890 1050 850M1165 1130Q1110 1110 1115 1020Q1110 950 1140 940Q1160 880 1240 890Q1270 840 1330 850L1340 890M1420 890Q1430 860 1450 850M1568 960Q1560 1010 1535 1010M1085 1308Q1080 1240 1145 1220Q1140 1185 1165 1185L1180 1220 1240 1205M1155 1308Q1160 1250 1210 1250Q1255 1255 1255 1308M1180 1308Q1190 1275 1210 1278Q1235 1285 1235 1308M1325 1308V1280M400 1305Q390 1290 420 1285L510 1272Q540 1280 500 1295L440 1308M10 1308 65 1290M650 1275 670 1308 820 1285Q840 1290 820 1308M930 1275 960 1290 1005 1300M1568 1185Q1530 1240 1540 1308"/>
        <g><circle cx="1058" cy="894" r="17"/><circle cx="1126" cy="894" r="18"/><circle cx="834" cy="860" r="25"/><circle cx="1470" cy="1300" r="25"/></g>
      </g>
    </svg>

    <div class="day">Today</div>
    <div class="notice"><svg class="lock" viewBox="0 0 22 28"><rect x="0" y="10" width="22" height="17" rx="3.500" fill="#ffd279"/><path d="M5 11V7a6 6 0 0 1 12 0v4" fill="none" stroke="#ffd279" stroke-width="2.800"/></svg><span class="lead">Messages and calls are end-to-end encrypted.</span><br>No one outside of this chat, not even WhatsApp, can<br>read or listen to them. Tap to learn more.</div>

    <div class="bubble first"><svg class="tail" viewBox="0 0 19 28"><path d="M3 0H19V28L1 5Q-1 1 3 0Z" fill="#202c33"/></svg>Online-Earning Jobs available, if<br>interested? Actuate Media Ltd has an<br>opening for you.<br><br>If interested just reply with YES to start<br>Earning with us now!!<time>11:06 am</time></div>

    <div class="unread">1 Unread Message</div>

    <div class="bubble second"><svg class="tail" viewBox="0 0 19 28"><path d="M3 0H19V28L1 5Q-1 1 3 0Z" fill="#202c33"/></svg>Your role is simple just to open Google<br>Maps and search our merchants pages,<br>Give a 5 star review, and earn 150 for the<br>first 3 tasks and more if you persist in<br>doing it you can earn up to 3000Rs a day.<time>12:04 pm</time></div>

    <section class="card">
      <p>This business account is not in your contact list</p>
      <div class="actions">
        <span class="block"><svg viewBox="0 0 42 42"><circle cx="21" cy="21" r="18.700" fill="none" stroke="#f15c6d" stroke-width="4"/><path d="M8 34 34 8" stroke="#f15c6d" stroke-width="4"/></svg>Block</span>
        <span class="add"><svg viewBox="0 0 46 35"><g fill="#06a884"><circle cx="29" cy="9" r="8.800"/><path d="M12.500 35V30Q13 22 29 21.500T46 30V35Z"/><path d="M6.200 7H10.200V13.500H16V17.500H10.200V24.500H6.200V17.500H0V13.500H6.200Z"/></g></svg>Add to contacts</span>
      </div>
    </section>

    <div class="composer">
      <div class="field">
        <svg class="emoji" viewBox="0 0 56 56"><circle cx="28" cy="28" r="28" fill="#8696a0"/><g fill="#202c33"><ellipse cx="19" cy="20.500" rx="4.500" ry="6"/><ellipse cx="37" cy="20.500" rx="4.500" ry="6"/><path d="M10 31Q28 34 46 31Q43 47 28 47T10 31Z"/></g><path d="M14 34.500Q28 37 42 34.500Q37 40.500 28 40.500T14 34.500Z" fill="#8696a0"/></svg>
        <i class="caret"></i><span class="ph">Message</span>
        <svg class="clip" viewBox="0 0 57 51"><path d="M31.500 5.500 49 23Q60 35 51 45T29 44L6 21Q-2 12 5 5T19 4L39 24Q44 30 40 34T30 33L17 19" fill="none" stroke="#8696a0" stroke-width="4.500" stroke-linejoin="round"/></svg>
        <svg class="cam" viewBox="0 0 55 51"><path d="M20 0H35Q37 0 38.500 2L41 6Q42 8 44 8H47Q55 8 55 16V43Q55 51 47 51H8Q0 51 0 43V16Q0 8 8 8H11Q13 8 14 6L16.500 2Q18 0 20 0Z" fill="#8696a0"/><circle cx="27.500" cy="27" r="11.300" fill="none" stroke="#202c33" stroke-width="4.500"/></svg>
      </div>
      <div class="mic"><svg viewBox="0 0 40 56"><rect x="12" y="0" width="16.500" height="34" rx="8.200" fill="#fff"/><path d="M2 26Q3 42 20 42T38 26M20 42V54" fill="none" stroke="#fff" stroke-width="4.500" stroke-linecap="round"/></svg></div>
    </div>

    <div class="floating"><svg viewBox="0 0 66 132"><circle cx="64.500" cy="66" r="63.500" fill="#000" stroke="#30363a" stroke-width="2"/><rect x="20" y="21" width="90" height="91" rx="17" fill="#fff"/><circle cx="67" cy="66.500" r="39" fill="#ffb44d"/><circle cx="67" cy="52" r="5" fill="#fff"/><path d="M51 59.500H66V63H64V82H60V63H51Z" fill="#fff"/></svg></div>
  </main>
  <footer class="nav"><i></i></footer>
</div>
</body>
</html>
```
FILE: styles.css
```css
* { box-sizing: border-box; }
body { margin: 0; background: #0b141a; font-family: Roboto, "Liberation Sans", sans-serif; color: #e9edef; }
svg { display: block; flex: none; }
.phone { width: 1080px; height: 2400px; display: flex; flex-direction: column; overflow: hidden; }

.top { height: 256px; background: #202c33; flex: none; }
.status { height: 128px; padding: 0 47px 0 41px; display: flex; align-items: center; }
.clock { font-size: 37px; font-weight: 500; line-height: 44px; margin-top: 4px; width: 166px; white-space: nowrap; letter-spacing: -.15px; }
.st-wa { width: 34px; height: 35px; }
.st-reddit { width: 32px; height: 30px; margin-left: 17px; }
.st-snap { width: 34px; height: 32px; margin-left: 17px; }
.st-dot { width: 7px; height: 7px; border-radius: 50%; background: #e9edef; margin-left: 30px; }
.sig { width: 48px; height: 31px; margin-left: auto; }
.sig2 { margin-left: 12px; }
.wifi { width: 46px; height: 33px; margin-left: 13px; }
.battery { width: 64px; height: 31px; border: 3.500px solid #e9edef; border-radius: 9px; margin-left: 15px; display: flex; align-items: center; justify-content: center; background: linear-gradient(#576168, #576168) 4px 50% / 38px 18px no-repeat; }
.battery b { font-size: 23px; font-weight: 700; line-height: 24px; margin-top: 2px; }
.batt-cap { width: 4px; height: 10px; border-radius: 2px; background: #e9edef; margin-left: 2px; margin-right: -1px; }

.bar { height: 128px; display: flex; align-items: flex-start; padding: 3px 55px 0 23px; }
.back { width: 44px; height: 46px; margin-top: 25px; }
.avatar { width: 96px; height: 96px; margin-left: 11px; }
.who { margin-left: 24px; flex: 1; }
.name { font-size: 49.700px; line-height: 60px; margin-top: -4px; white-space: nowrap; }
.presence { font-size: 33.600px; line-height: 40px; margin-top: 4px; }
.call { width: 50px; height: 50px; margin-top: 23px; }
.more { width: 12px; height: 46px; margin: 25px 0 0 85px; }

.chat { position: relative; height: 2100px; background: #07131a; display: flex; flex-direction: column; align-items: flex-start; flex: none; z-index: 0; }
.wallpaper { position: absolute; inset: 0; width: 1080px; height: 2100px; z-index: -1; fill: none; stroke: #17242a; stroke-width: 2.600px; stroke-linejoin: round; stroke-linecap: round; }
.wallpaper path, .wallpaper circle, .wallpaper ellipse { vector-effect: non-scaling-stroke; }
.letters { font: 900 54px Roboto, sans-serif; stroke-width: 2.200px; }
.hi { font-size: 60px; }

.day { align-self: center; margin-top: 15px; width: 142px; height: 75px; border-radius: 24px; background: #1d282f; color: #8696a0; font-size: 35px; font-weight: 500; line-height: 76px; text-align: center; }
.notice { align-self: center; margin-top: 29px; width: 870px; height: 159px; border-radius: 24px; padding-top: 18px; background: #1d272d; color: #ffd279; font-size: 35.150px; line-height: 42px; text-align: center; white-space: nowrap; }
.lead { letter-spacing: .1px; }
.lock { display: inline-block; width: 22px; height: 28px; margin-right: 16px; vertical-align: -3px; }

.bubble { position: relative; margin-left: 44px; width: 882px; background: #202c33; border-radius: 0 28px 28px 28px; padding: 18px 0 0 28px; font-size: 44px; line-height: 52px; white-space: nowrap; }
.first { margin-top: 28px; height: 349px; }
.second { margin-top: 39px; height: 344px; }
.tail { position: absolute; left: -19px; top: 0; width: 20px; height: 28px; }
.bubble time { position: absolute; right: 23px; bottom: 9px; font-size: 33.400px; line-height: 38px; color: #8696a0; }
.unread { align-self: center; margin-top: 40px; width: 412px; height: 91px; border-radius: 46px; background: #202c33; font-size: 36px; font-weight: 700; line-height: 96px; text-align: center; }

.card { margin: 528px 0 0 14px; width: 1051px; height: 250px; border-radius: 24px; background: #303b42; }
.card p { margin: 0; padding-top: 37px; font-size: 39px; line-height: 46px; text-align: center; white-space: nowrap; }
.actions { display: flex; font-size: 39px; font-weight: 500; line-height: 46px; margin-top: 66px; }
.actions span { display: flex; align-items: center; white-space: nowrap; }
.block { color: #f15c6d; padding-left: 188px; width: 598px; }
.block svg { width: 42px; height: 42px; margin-right: 26px; }
.add { color: #06a884; }
.add svg { width: 46px; height: 35px; margin-right: 26px; }

.composer { display: flex; align-items: center; margin: 12px 0 0 14px; height: 129px; }
.field { width: 911px; height: 126px; border-radius: 63px; background: #202c33; display: flex; align-items: center; padding: 0 38px 0 31px; }
.emoji { width: 56px; height: 56px; }
.caret { width: 6px; height: 67px; background: #06a884; margin-left: 31px; }
.ph { font-size: 50px; line-height: 60px; color: #8696a0; flex: 1; margin: 5px 0 0 -5px; }
.clip { width: 57px; height: 51px; }
.cam { width: 55px; height: 51px; margin-left: 65px; margin-top: -4px; }
.mic { width: 129px; height: 129px; border-radius: 50%; background: #00a884; margin-left: 14px; display: flex; align-items: center; justify-content: center; }
.mic svg { width: 40px; height: 56px; }

.floating { position: absolute; right: 0; top: 275px; width: 66px; height: 132px; overflow: hidden; }
.floating svg { width: 66px; height: 132px; }

.nav { flex: 1; background: #0b141a; display: flex; justify-content: center; padding-top: 17px; }
.nav i { width: 399px; height: 10px; border-radius: 5px; background: #fff; }
```
